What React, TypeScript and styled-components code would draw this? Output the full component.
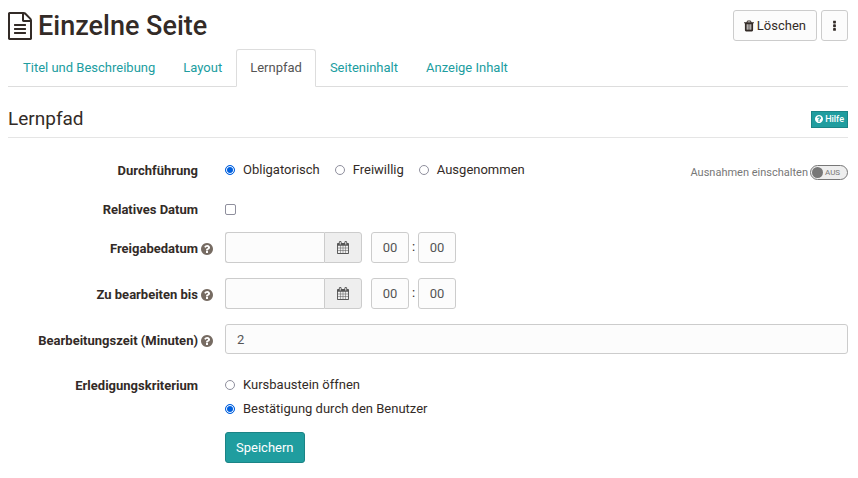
import React, { useId, useState } from "react";
import styled, { createGlobalStyle } from "styled-components";

const GlobalStyle = createGlobalStyle`
  *, *::before, *::after { box-sizing: border-box; }
  body {
    margin: 0;
    background: #fff;
    color: #332b27;
    font: 13px/16px Roboto, "Liberation Sans", sans-serif;
  }
  input, button { font: inherit; margin: 0; }
`;

const Page = styled.main`
  padding: 8px 10px 16px 8px;
`;

const Header = styled.header`
  display: flex;
  justify-content: space-between;
  align-items: flex-start;
`;

const Title = styled.h1`
  display: flex;
  align-items: center;
  gap: 6px;
  margin: 0;
  font-size: 27px;
  line-height: 36px;
  font-weight: 500;
`;

const Actions = styled.div`
  display: flex;
  gap: 4px;
  padding-top: 2px;
`;

const Button = styled.button<{ $primary?: boolean }>`
  display: inline-flex;
  align-items: center;
  justify-content: center;
  gap: 3px;
  height: 31px;
  padding: 0 10px;
  border: 1px solid ${(p) => (p.$primary ? "#1b8486" : "#ccc")};
  border-radius: 3px;
  background: ${(p) => (p.$primary ? "#209d9f" : "#fcfcfc")};
  color: ${(p) => (p.$primary ? "#fff" : "#332b27")};
  cursor: pointer;
`;

const Tabs = styled.nav`
  display: flex;
  margin-top: 5px;
  padding-left: 1px;
  border-bottom: 1px solid #ddd;
`;

const Tab = styled.a<{ $active?: boolean }>`
  margin-bottom: -1px;
  padding: 10px 13px;
  border: 1px solid;
  border-color: ${(p) => (p.$active ? "#ddd #ddd #fff" : "transparent")};
  border-radius: 3px 3px 0 0;
  color: ${(p) => (p.$active ? "#555" : "#209d9f")};
  text-decoration: none;
`;

const Section = styled.div`
  display: flex;
  align-items: center;
  justify-content: space-between;
  margin-top: 19px;
  padding-bottom: 5px;
  border-bottom: 1px solid #e5e5e5;
`;

const Heading = styled.h2`
  margin: 0;
  font-size: 19px;
  line-height: 26px;
  font-weight: 400;
`;

const HelpLink = styled.a`
  display: flex;
  align-items: center;
  gap: 2px;
  height: 17px;
  padding: 0 3px;
  border: 1px solid #1b8486;
  background: #209d9f;
  color: #fff;
  font-size: 9px;
  font-weight: 500;
  text-decoration: none;
`;

const Form = styled.form`
  display: grid;
  gap: 15px;
  margin-top: 16px;
`;

const Row = styled.div`
  display: grid;
  grid-template-columns: 25% minmax(0, 1fr);
  column-gap: 7px;
  align-items: start;
`;

const LabelCell = styled.div`
  display: flex;
  justify-content: flex-end;
  padding: 9px 5px 0 0;
  line-height: 15px;
  font-weight: 700;
  text-align: right;
`;

const HelpSlot = styled.span`
  display: flex;
  align-items: center;
  flex: none;
  width: 15px;
  padding-left: 3px;
  color: #766b62;
`;

const Options = styled.div<{ $stacked?: boolean }>`
  display: flex;
  flex-direction: ${(p) => (p.$stacked ? "column" : "row")};
  gap: ${(p) => (p.$stacked ? "8px" : "15px")};
  padding-top: 8px;
`;

const Spread = styled.div`
  display: flex;
  justify-content: space-between;
  align-items: flex-start;
`;

const Choice = styled.label`
  display: flex;
  align-items: center;
  gap: 8px;
`;

const Radio = styled.input.attrs({ type: "radio" })`
  appearance: none;
  width: 10px;
  height: 10px;
  border: 1px solid #8f8f9d;
  border-radius: 50%;
  background: #fff;
  &:checked {
    border-color: #0060df;
    background: #0060df;
    box-shadow: inset 0 0 0 1px #fff;
  }
`;

const Checkbox = styled.input.attrs({ type: "checkbox" })`
  appearance: none;
  width: 11px;
  height: 11px;
  border: 1px solid #8f8f9d;
  border-radius: 2px;
  background: #fff;
  &:checked { background: #0060df; border-color: #0060df; }
`;

const CheckCell = styled.div`
  display: flex;
  align-items: center;
  height: 16px;
  margin-top: 8px;
`;

const SwitchWrap = styled.div`
  display: flex;
  align-items: center;
  gap: 2px;
  margin: 11px 0 -2px;
  color: #777;
  font-size: 11px;
  line-height: 15px;
`;

const Switch = styled.button<{ $on: boolean }>`
  display: flex;
  flex-direction: ${(p) => (p.$on ? "row-reverse" : "row")};
  align-items: center;
  gap: 2px;
  width: 38px;
  height: 15px;
  padding: 0 1px;
  border: 1px solid #777;
  border-radius: 8px;
  background: #eee;
  color: #777;
  font-size: 8px;
  line-height: 12px;
`;

const Knob = styled.span`
  width: 11px;
  height: 11px;
  border-radius: 50%;
  background: #777;
`;

const DateLine = styled.div`
  display: flex;
`;

const TextField = styled.input.attrs({ type: "text" })`
  width: 100%;
  min-width: 0;
  height: 30px;
  padding: 0 11px;
  border: 1px solid #ccc;
  border-radius: 3px;
  background: #fcfcfc;
  color: #555;
`;

const DateField = styled(TextField)`
  width: 99px;
  height: 31px;
  border-right: 0;
  border-radius: 3px 0 0 3px;
`;

const CalendarButton = styled.button`
  display: flex;
  align-items: center;
  justify-content: center;
  width: 38px;
  height: 31px;
  margin-right: 9px;
  padding: 0;
  border: 1px solid #ccc;
  border-radius: 0 3px 3px 0;
  background: #eee;
  color: #555;
`;

const TimeField = styled(TextField)`
  width: 38px;
  height: 31px;
  padding: 0;
  text-align: center;
`;

const Colon = styled.span`
  width: 9px;
  line-height: 29px;
  text-align: center;
`;

const Svg = styled.svg`
  display: block;
  flex: none;
  fill: currentColor;
`;

const paths = {
  file: "M1596 380q28 28 48 76t20 88v1152q0 40-28 68t-68 28h-1344q-40 0-68-28t-28-68v-1600q0-40 28-68t68-28h896q40 0 88 20t76 48zm-444-244v376h376q-10-29-22-41l-313-313q-12-12-41-22zm384 1528v-1024h-416q-40 0-68-28t-28-68v-416h-768v1536h1280zm-1024-864q0-14 9-23t23-9h704q14 0 23 9t9 23v64q0 14-9 23t-23 9h-704q-14 0-23-9t-9-23v-64zm736 224q14 0 23 9t9 23v64q0 14-9 23t-23 9h-704q-14 0-23-9t-9-23v-64q0-14 9-23t23-9h704zm0 256q14 0 23 9t9 23v64q0 14-9 23t-23 9h-704q-14 0-23-9t-9-23v-64q0-14 9-23t23-9h704z",
  calendar: "M192 1664h288v-288h-288v288zm352 0h320v-288h-320v288zm-352-352h288v-320h-288v320zm352 0h320v-320h-320v320zm-352-384h288v-288h-288v288zm736 736h320v-288h-320v288zm-384-736h320v-288h-320v288zm768 736h288v-288h-288v288zm-384-352h320v-320h-320v320zm-352-864v-288q0-13-9.500-22.500t-22.500-9.500h-64q-13 0-22.500 9.500t-9.500 22.500v288q0 13 9.500 22.500t22.500 9.500h64q13 0 22.500-9.500t9.500-22.500zm736 864h288v-320h-288v320zm-384-384h320v-288h-320v288zm384 0h288v-288h-288v288zm32-480v-288q0-13-9.500-22.500t-22.500-9.500h-64q-13 0-22.500 9.500t-9.500 22.500v288q0 13 9.500 22.500t22.500 9.500h64q13 0 22.500-9.500t9.500-22.500zm384-64v1280q0 52-38 90t-90 38h-1408q-52 0-90-38t-38-90v-1280q0-52 38-90t90-38h128v-96q0-66 47-113t113-47h64q66 0 113 47t47 113v96h384v-96q0-66 47-113t113-47h64q66 0 113 47t47 113v96h128q52 0 90 38t38 90z",
  trash: "M704 1376v-704q0-14-9-23t-23-9h-64q-14 0-23 9t-9 23v704q0 14 9 23t23 9h64q14 0 23-9t9-23zm256 0v-704q0-14-9-23t-23-9h-64q-14 0-23 9t-9 23v704q0 14 9 23t23 9h64q14 0 23-9t9-23zm256 0v-704q0-14-9-23t-23-9h-64q-14 0-23 9t-9 23v704q0 14 9 23t23 9h64q14 0 23-9t9-23zm-544-992h448l-48-117q-7-9-17-11h-317q-10 2-17 11zm928 32v64q0 14-9 23t-23 9h-96v948q0 83-47 143.500t-113 60.500h-832q-66 0-113-58.500t-47-141.500v-952h-96q-14 0-23-9t-9-23v-64q0-14 9-23t23-9h309l70-167q15-37 54-63t79-26h320q40 0 79 26t54 63l70 167h309q14 0 23 9t9 23z",
  question: "M1024 1376v-192q0-14-9-23t-23-9h-192q-14 0-23 9t-9 23v192q0 14 9 23t23 9h192q14 0 23-9t9-23zm256-672q0-88-55.500-163t-138.500-116-170-41q-243 0-371 213-15 24 8 42l132 100q7 6 19 6 16 0 25-12 53-68 86-92 34-24 86-24 48 0 85.500 26t37.500 59q0 38-20 61t-68 45q-63 28-115.500 86.500t-52.500 125.500v36q0 14 9 23t23 9h192q14 0 23-9t9-23q0-19 21.500-49.500t54.500-49.500q32-18 49-28.500t46-35 44.500-48 28-60.500 12.500-81zm384 192q0 209-103 385.500t-279.500 279.500-385.500 103-385.500-103-279.500-279.500-103-385.500 103-385.500 279.500-279.500 385.500-103 385.500 103 279.500 279.500 103 385.500z",
  dots: "M768 320q0-40 28-68t68-28h192q40 0 68 28t28 68v192q0 40-28 68t-68 28h-192q-40 0-68-28t-28-68zM768 832q0-40 28-68t68-28h192q40 0 68 28t28 68v192q0 40-28 68t-68 28h-192q-40 0-68-28t-28-68zM768 1344q0-40 28-68t68-28h192q40 0 68 28t28 68v192q0 40-28 68t-68 28h-192q-40 0-68-28t-28-68z",
};

interface IconProps {
  name: keyof typeof paths;
  width: number;
  height: number;
  box: string;
}

const Icon = ({ name, width, height, box }: IconProps) => (
  <Svg width={width} height={height} viewBox={box} aria-hidden="true">
    <path d={paths[name]} />
  </Svg>
);

const Help = ({ size }: { size: number }) => (
  <Icon name="question" width={size} height={size} box="128 128 1536 1536" />
);

interface FieldLabelProps {
  text: string;
  htmlFor?: string;
  id?: string;
  help?: boolean;
}

const FieldLabel = ({ text, htmlFor, id, help }: FieldLabelProps) => (
  <LabelCell>
    {htmlFor ? <label htmlFor={htmlFor}>{text}</label> : <span id={id}>{text}</span>}
    <HelpSlot>{help && <Help size={12} />}</HelpSlot>
  </LabelCell>
);

const DateRow = ({ label }: { label: string }) => {
  const id = useId();
  return (
    <Row>
      <FieldLabel text={label} htmlFor={id} help />
      <DateLine>
        <DateField id={id} />
        <CalendarButton type="button" aria-label="Kalender">
          <Icon name="calendar" width={12} height={13} box="64 0 1664 1792" />
        </CalendarButton>
        <TimeField defaultValue="00" aria-label={`${label} Stunde`} />
        <Colon>:</Colon>
        <TimeField defaultValue="00" aria-label={`${label} Minute`} />
      </DateLine>
    </Row>
  );
};

interface RadioRowProps {
  label: string;
  name: string;
  options: string[];
  selected: string;
  stacked?: boolean;
  children?: React.ReactNode;
}

const RadioRow = ({ label, name, options, selected, stacked, children }: RadioRowProps) => {
  const id = useId();
  return (
    <Row>
      <FieldLabel text={label} id={id} />
      <Spread>
        <Options $stacked={stacked} role="radiogroup" aria-labelledby={id}>
          {options.map((option) => (
            <Choice key={option}>
              <Radio name={name} defaultChecked={option === selected} />
              {option}
            </Choice>
          ))}
        </Options>
        {children}
      </Spread>
    </Row>
  );
};

const tabs = ["Titel und Beschreibung", "Layout", "Lernpfad", "Seiteninhalt", "Anzeige Inhalt"];

export default function App() {
  const [exceptions, setExceptions] = useState(false);
  return (
    <>
      <GlobalStyle />
      <Page>
        <Header>
          <Title>
            <Icon name="file" width={24} height={28} box="128 0 1536 1792" />
            Einzelne Seite
          </Title>
          <Actions>
            <Button type="button">
              <Icon name="trash" width={10} height={12} box="192 64 1408 1664" />
              Löschen
            </Button>
            <Button type="button" aria-label="Weitere Aktionen">
              <Icon name="dots" width={5} height={13} box="640 0 640 1792" />
            </Button>
          </Actions>
        </Header>
        <Tabs>
          {tabs.map((tab) => (
            <Tab key={tab} href="#" $active={tab === "Lernpfad"}>
              {tab}
            </Tab>
          ))}
        </Tabs>
        <Section>
          <Heading>Lernpfad</Heading>
          <HelpLink href="#">
            <Help size={8} />
            Hilfe
          </HelpLink>
        </Section>
        <Form onSubmit={(e) => e.preventDefault()}>
          <RadioRow
            label="Durchführung"
            name="obligation"
            options={["Obligatorisch", "Freiwillig", "Ausgenommen"]}
            selected="Obligatorisch"
          >
            <SwitchWrap>
              <label htmlFor="exceptions">Ausnahmen einschalten</label>
              <Switch
                id="exceptions"
                type="button"
                role="switch"
                aria-checked={exceptions}
                $on={exceptions}
                onClick={() => setExceptions(!exceptions)}
              >
                <Knob />
                {exceptions ? "EIN" : "AUS"}
              </Switch>
            </SwitchWrap>
          </RadioRow>
          <Row>
            <FieldLabel text="Relatives Datum" htmlFor="relative" />
            <CheckCell>
              <Checkbox id="relative" />
            </CheckCell>
          </Row>
          <DateRow label="Freigabedatum" />
          <DateRow label="Zu bearbeiten bis" />
          <Row>
            <FieldLabel text="Bearbeitungszeit (Minuten)" htmlFor="duration" help />
            <TextField id="duration" defaultValue="2" />
          </Row>
          <RadioRow
            label="Erledigungskriterium"
            name="criterion"
            options={["Kursbaustein öffnen", "Bestätigung durch den Benutzer"]}
            selected="Bestätigung durch den Benutzer"
            stacked
          />
          <Row>
            <span />
            <div>
              <Button type="submit" $primary>
                Speichern
              </Button>
            </div>
          </Row>
        </Form>
      </Page>
    </>
  );
}
